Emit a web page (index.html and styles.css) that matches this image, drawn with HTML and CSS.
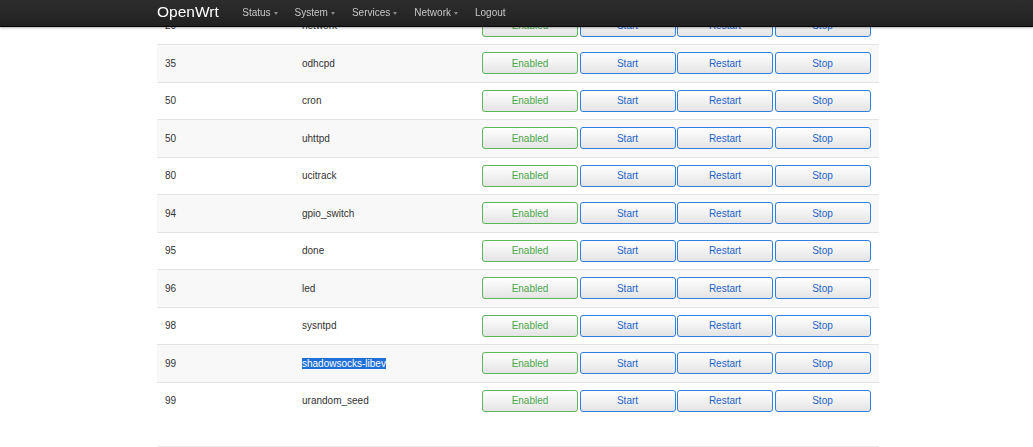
FILE: index.html
```html
<!DOCTYPE html>
<html>
<head>
<meta charset="utf-8">
<link rel="stylesheet" href="styles.css">
</head>
<body>
<header class="navbar">
  <div class="nav-inner">
    <a class="brand">OpenWrt</a>
    <ul class="menu">
      <li>Status<span class="caret"></span></li>
      <li>System<span class="caret"></span></li>
      <li>Services<span class="caret"></span></li>
      <li>Network<span class="caret"></span></li>
      <li>Logout</li>
    </ul>
  </div>
</header>
<main class="content">
  <div class="table">
    <div class="row odd"><div class="cell">20</div><div class="cell">network</div><div class="cell actions"><button class="btn en">Enabled</button><button class="btn act">Start</button><button class="btn act">Restart</button><button class="btn act">Stop</button></div></div>
    <div class="row even"><div class="cell">35</div><div class="cell">odhcpd</div><div class="cell actions"><button class="btn en">Enabled</button><button class="btn act">Start</button><button class="btn act">Restart</button><button class="btn act">Stop</button></div></div>
    <div class="row odd"><div class="cell">50</div><div class="cell">cron</div><div class="cell actions"><button class="btn en">Enabled</button><button class="btn act">Start</button><button class="btn act">Restart</button><button class="btn act">Stop</button></div></div>
    <div class="row even"><div class="cell">50</div><div class="cell">uhttpd</div><div class="cell actions"><button class="btn en">Enabled</button><button class="btn act">Start</button><button class="btn act">Restart</button><button class="btn act">Stop</button></div></div>
    <div class="row odd"><div class="cell">80</div><div class="cell">ucitrack</div><div class="cell actions"><button class="btn en">Enabled</button><button class="btn act">Start</button><button class="btn act">Restart</button><button class="btn act">Stop</button></div></div>
    <div class="row even"><div class="cell">94</div><div class="cell">gpio_switch</div><div class="cell actions"><button class="btn en">Enabled</button><button class="btn act">Start</button><button class="btn act">Restart</button><button class="btn act">Stop</button></div></div>
    <div class="row odd"><div class="cell">95</div><div class="cell">done</div><div class="cell actions"><button class="btn en">Enabled</button><button class="btn act">Start</button><button class="btn act">Restart</button><button class="btn act">Stop</button></div></div>
    <div class="row even"><div class="cell">96</div><div class="cell">led</div><div class="cell actions"><button class="btn en">Enabled</button><button class="btn act">Start</button><button class="btn act">Restart</button><button class="btn act">Stop</button></div></div>
    <div class="row odd"><div class="cell">98</div><div class="cell">sysntpd</div><div class="cell actions"><button class="btn en">Enabled</button><button class="btn act">Start</button><button class="btn act">Restart</button><button class="btn act">Stop</button></div></div>
    <div class="row even"><div class="cell">99</div><div class="cell"><span class="sel">shadowsocks-libev</span></div><div class="cell actions"><button class="btn en">Enabled</button><button class="btn act">Start</button><button class="btn act">Restart</button><button class="btn act">Stop</button></div></div>
    <div class="row odd"><div class="cell">99</div><div class="cell">urandom_seed</div><div class="cell actions"><button class="btn en">Enabled</button><button class="btn act">Start</button><button class="btn act">Restart</button><button class="btn act">Stop</button></div></div>
  </div>
  <div class="footer-line"></div>
</main>
</body>
</html>
```

FILE: styles.css
```css
html, body {
  margin: 0;
  padding: 0;
  background: #fff;
  font-family: "Liberation Sans", Arial, Helvetica, sans-serif;
  font-size: 10px;
  color: #333;
  overflow: hidden;
}

.navbar {
  position: fixed;
  top: 0;
  left: 0;
  right: 0;
  height: 26px;
  background: linear-gradient(#2d2d2d, #212121);
  border-bottom: 1px solid #050505;
  box-shadow: 0 1px 2px rgba(0, 0, 0, 0.3);
  z-index: 10;
}

.nav-inner {
  display: flex;
  align-items: center;
  height: 26px;
  padding-left: 157px;
}

.brand {
  color: #fff;
  font-size: 15.5px;
  line-height: 24px;
  margin-right: 15px;
  margin-bottom: 2px;
}

.menu {
  display: flex;
  list-style: none;
  margin: 0;
  padding: 0;
}

.menu li {
  color: #c8c8c8;
  font-size: 10px;
  line-height: 26px;
  padding: 0 8.5px;
}

.caret {
  display: inline-block;
  width: 0;
  height: 0;
  border-left: 2.5px solid transparent;
  border-right: 2.5px solid transparent;
  border-top: 3px solid #8a8a8a;
  vertical-align: middle;
  margin-left: 3px;
}

.content {
  padding-left: 157px;
  padding-top: 6.5px;
  width: 722px;
}

.row {
  display: grid;
  grid-template-columns: 137px 180px 1fr;
  height: 37.5px;
  box-sizing: border-box;
  border-top: 1px solid #e3e3e3;
  align-items: center;
}

.row.even {
  background: #f8f8f8;
}

.cell {
  padding-left: 8px;
  line-height: 15px;
}

.sel {
  background: #1e6fd6;
  color: #fff;
}

.actions {
  display: flex;
  gap: 1.5px;
}

.btn {
  width: 96px;
  height: 22px;
  box-sizing: border-box;
  border-radius: 3px;
  font-family: "Liberation Sans", Arial, Helvetica, sans-serif;
  font-size: 10px;
  padding: 0;
  background: linear-gradient(#ffffff, #e4e4e4);
  cursor: pointer;
}

.btn.en {
  border: 1px solid #5cb65c;
  color: #4aa84a;
}

.btn.act {
  border: 1px solid #2e7fe0;
  color: #1d63c9;
}

.footer-line {
  margin-top: 27px;
  border-top: 1px solid #eaeaea;
}
```
